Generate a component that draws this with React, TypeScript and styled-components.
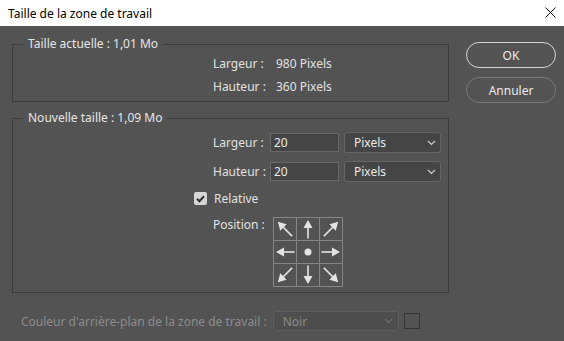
import styled, { createGlobalStyle } from 'styled-components'

const GlobalStyle = createGlobalStyle`
    html, body {
        margin: 0;
        padding: 0;
        background: #535353;
    }
    body {
        font-family: "Noto Sans", "Open Sans", sans-serif;
        font-size: 12px;
    }
`

const ARROWS = [-45, 0, 45, -90, null, 90, -135, 180, 135]

function Arrow({ angle }: { angle: number | null }) {
    if (angle === null) {
        return <svg width="22" height="22" viewBox="0 0 22 22">
            <circle cx="11" cy="11" r="3.5" fill="#e4e4e4" />
        </svg>
    }
    const diag = angle % 90 !== 0
    const tail = diag ? 21 : 20.5
    const tip = diag ? 0.8 : 2
    return <svg width="22" height="22" viewBox="0 0 22 22">
        <g transform={`rotate(${angle} 11 11)`}>
            <line x1="11" y1={tail} x2="11" y2={tip + 6} stroke="#e4e4e4" strokeWidth="1.6" />
            <polygon points={`11,${tip} 6.5,${tip + 8} 15.5,${tip + 8}`} fill="#e4e4e4" />
        </g>
    </svg>
}

function Chevron({ color }: { color: string }) {
    return <svg width="9" height="6" viewBox="0 0 9 6">
        <polyline points="1,1 4.5,4.5 8,1" fill="none" stroke={color} strokeWidth="1.2" />
    </svg>
}

export default function App() {
    return <Window>
        <GlobalStyle />
        <TitleBar>
            <TitleText>Taille de la zone de travail</TitleText>
            <CloseButton>
                <svg width="11" height="11" viewBox="0 0 11 11">
                    <path d="M0.5 0.5 L10.5 10.5 M10.5 0.5 L0.5 10.5" stroke="#111" strokeWidth="1" />
                </svg>
            </CloseButton>
        </TitleBar>

        <Body>
            <MainColumn>
                <Group>
                    <Legend>Taille actuelle : 1,01 Mo</Legend>
                    <InfoRow>
                        <InfoLabel>Largeur :</InfoLabel>
                        <span>980 Pixels</span>
                    </InfoRow>
                    <InfoRow>
                        <InfoLabel>Hauteur :</InfoLabel>
                        <span>360 Pixels</span>
                    </InfoRow>
                </Group>

                <Group $spaced>
                    <Legend>Nouvelle taille : 1,09 Mo</Legend>
                    <FieldRow>
                        <FieldLabel>Largeur :</FieldLabel>
                        <NumberInput>20</NumberInput>
                        <Select>
                            <span>Pixels</span>
                            <Chevron color="#cfcfcf" />
                        </Select>
                    </FieldRow>
                    <FieldRow>
                        <FieldLabel>Hauteur :</FieldLabel>
                        <NumberInput>20</NumberInput>
                        <Select>
                            <span>Pixels</span>
                            <Chevron color="#cfcfcf" />
                        </Select>
                    </FieldRow>
                    <CheckRow>
                        <Checkbox>
                            <svg width="13" height="13" viewBox="0 0 13 13">
                                <path d="M3 6.8 L5.4 9.2 L10 4.3" fill="none" stroke="#2e2e2e" strokeWidth="2" />
                            </svg>
                        </Checkbox>
                        <span>Relative</span>
                    </CheckRow>
                    <PositionRow>
                        <PositionLabel>Position :</PositionLabel>
                        <AnchorGrid>
                            {ARROWS.map((a, i) => <AnchorCell key={i}><Arrow angle={a} /></AnchorCell>)}
                        </AnchorGrid>
                    </PositionRow>
                </Group>

                <BackgroundRow>
                    <span>Couleur d'arrière-plan de la zone de travail :</span>
                    <DisabledSelect>
                        <span>Noir</span>
                        <Chevron color="#6e6e6e" />
                    </DisabledSelect>
                    <Swatch />
                </BackgroundRow>
            </MainColumn>

            <ButtonColumn>
                <Button $primary>OK</Button>
                <Button>Annuler</Button>
            </ButtonColumn>
        </Body>
    </Window>
}

const Window = styled.div`
    width: 564px;
    height: 341px;
    background: #535353;
    color: #e2e2e2;
    overflow: hidden;
`

const TitleBar = styled.div`
    height: 26px;
    background: #ffffff;
    color: #000;
    display: flex;
    align-items: center;
    justify-content: space-between;
    padding: 0 8px 0 8px;
    box-sizing: border-box;
`

const TitleText = styled.div`
    font-size: 12px;
`

const CloseButton = styled.div`
    display: flex;
    width: 11px;
    height: 11px;
    margin-top: -1px;
`

const Body = styled.div`
    display: flex;
    padding: 10px 0 0 12px;
`

const MainColumn = styled.div`
    width: 437px;
    display: flex;
    flex-direction: column;
`

const Group = styled.fieldset<{ $spaced?: boolean }>`
    margin: ${p => p.$spaced ? '8px' : '0'} 0 0 0;
    padding: 0 0 3px 0;
    border: 1px solid #3d3d3d;
    line-height: 16px;
`

const Legend = styled.legend`
    margin-left: 10px;
    padding: 0 5px;
    color: #e6e6e6;
`

const InfoRow = styled.div`
    display: flex;
    align-items: center;
    height: 23px;
    padding-left: 200px;
`

const InfoLabel = styled.span`
    width: 63px;
`

const FieldRow = styled.div`
    display: flex;
    align-items: center;
    height: 29px;
    padding-left: 200px;
    &:first-of-type {
        margin-top: 2px;
    }
`

const FieldLabel = styled.span`
    width: 57px;
`

const NumberInput = styled.div`
    width: 69px;
    height: 19px;
    box-sizing: border-box;
    background: #454545;
    border: 1px solid #686868;
    padding-left: 3px;
    line-height: 17px;
    color: #eaeaea;
`

const Select = styled.div`
    margin-left: 5px;
    width: 97px;
    height: 21px;
    box-sizing: border-box;
    background: #454545;
    border: 1px solid #656565;
    border-radius: 3px;
    display: flex;
    align-items: center;
    justify-content: space-between;
    padding: 0 4px 0 9px;
    color: #eaeaea;
`

const CheckRow = styled.div`
    display: flex;
    align-items: center;
    height: 25px;
    padding-left: 181px;
    gap: 7px;
`

const Checkbox = styled.div`
    width: 13px;
    height: 13px;
    background: #d6d6d6;
    border-radius: 2px;
    display: flex;
`

const PositionRow = styled.div`
    display: flex;
    align-items: flex-start;
    padding: 6px 0 2px 200px;
`

const PositionLabel = styled.span`
    width: 60px;
`

const AnchorGrid = styled.div`
    display: grid;
    grid-template-columns: repeat(3, 22px);
    grid-template-rows: repeat(3, 22px);
    gap: 1px;
    padding: 1px;
    background: #858585;
`

const AnchorCell = styled.div`
    background: #535353;
    display: flex;
`

const BackgroundRow = styled.div`
    display: flex;
    align-items: center;
    margin-top: 18px;
    margin-left: 9px;
    color: #8c8c8c;
`

const DisabledSelect = styled.div`
    margin-left: 6px;
    width: 126px;
    height: 20px;
    box-sizing: border-box;
    background: #4e4e4e;
    border: 1px solid #5d5d5d;
    border-radius: 3px;
    display: flex;
    align-items: center;
    justify-content: space-between;
    padding: 0 5px 0 9px;
    color: #8a8a8a;
`

const Swatch = styled.div`
    margin-left: 5px;
    width: 16px;
    height: 16px;
    box-sizing: border-box;
    border: 1px solid #363636;
`

const ButtonColumn = styled.div`
    margin-left: 17px;
    padding-top: 6px;
    display: flex;
    flex-direction: column;
    gap: 9px;
`

const Button = styled.div<{ $primary?: boolean }>`
    width: 90px;
    height: 26px;
    box-sizing: border-box;
    border-radius: 13px;
    border: 1px solid ${p => p.$primary ? '#d4d4d4' : '#7a7a7a'};
    display: flex;
    align-items: center;
    justify-content: center;
    color: #ececec;
`
